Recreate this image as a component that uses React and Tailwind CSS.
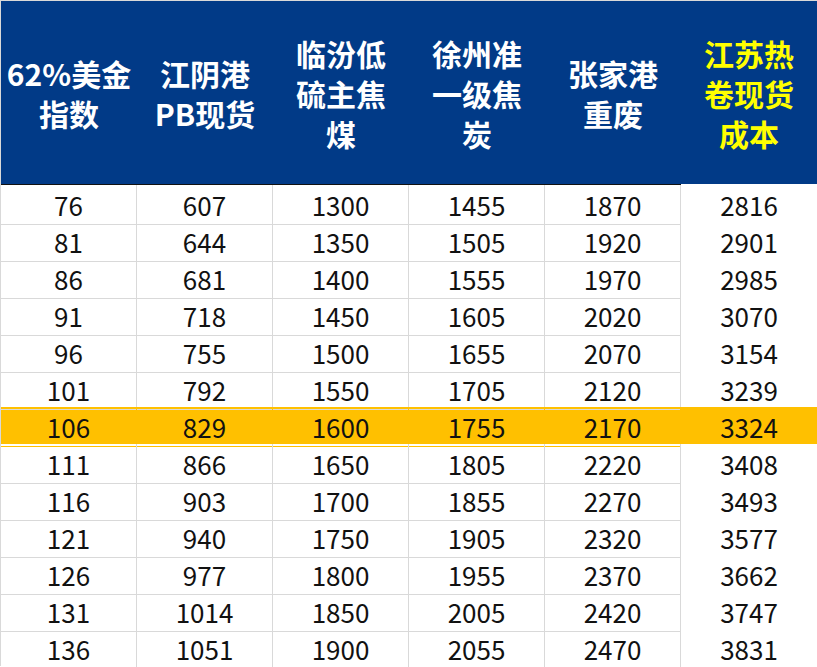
const headers = [
  { lines: ['62%美金', '指数'] },
  { lines: ['江阴港', 'PB现货'] },
  { lines: ['临汾低', '硫主焦', '煤'] },
  { lines: ['徐州准', '一级焦', '炭'] },
  { lines: ['张家港', '重废'] },
  { lines: ['江苏热', '卷现货', '成本'], yellow: true },
];

const rows = [
  [76, 607, 1300, 1455, 1870, 2816],
  [81, 644, 1350, 1505, 1920, 2901],
  [86, 681, 1400, 1555, 1970, 2985],
  [91, 718, 1450, 1605, 2020, 3070],
  [96, 755, 1500, 1655, 2070, 3154],
  [101, 792, 1550, 1705, 2120, 3239],
  [106, 829, 1600, 1755, 2170, 3324],
  [111, 866, 1650, 1805, 2220, 3408],
  [116, 903, 1700, 1855, 2270, 3493],
  [121, 940, 1750, 1905, 2320, 3577],
  [126, 977, 1800, 1955, 2370, 3662],
  [131, 1014, 1850, 2005, 2420, 3747],
  [136, 1051, 1900, 2055, 2470, 3831],
];

export default function App() {
  return (
    <div
      className="w-[817px] h-[667px] overflow-hidden bg-white"
      style={{ fontFamily: "'Noto Sans CJK SC', 'Noto Sans', sans-serif" }}
    >
      {/* Header */}
      <div className="grid grid-cols-6 h-[185px] border-t border-l border-[#d9d9d9]">
        {headers.map((h, i) => (
          <div
            key={i}
            className={
              'flex flex-col items-center justify-center bg-[#013a87] font-bold text-[30px] leading-[40px] ' +
              (h.yellow ? 'text-[#ffff00] h-[183px]' : 'text-white border-b border-[#111]')
            }
          >
            {h.lines.map((l, j) => (
              <div key={j}>{l}</div>
            ))}
          </div>
        ))}
      </div>

      {/* Body */}
      <div className="border-l border-[#d9d9d9]">
        {rows.map((r, i) => {
          const hl = i === 6;
          return (
            <div key={i} className={'grid grid-cols-6 h-[37px] ' + (hl ? 'bg-[#ffc000]' : '')}>
              {r.map((v, j) => (
                <div
                  key={j}
                  className={
                    'flex items-center justify-center text-[26px] text-[#111] border-b ' +
                    (j < 5 ? 'border-r ' : 'border-transparent ') +
                    (j < 5 ? (hl ? 'border-[#ffc000]' : 'border-[#d9d9d9]') : '')
                  }
                >
                  {v}
                </div>
              ))}
            </div>
          );
        })}
      </div>
    </div>
  );
}
